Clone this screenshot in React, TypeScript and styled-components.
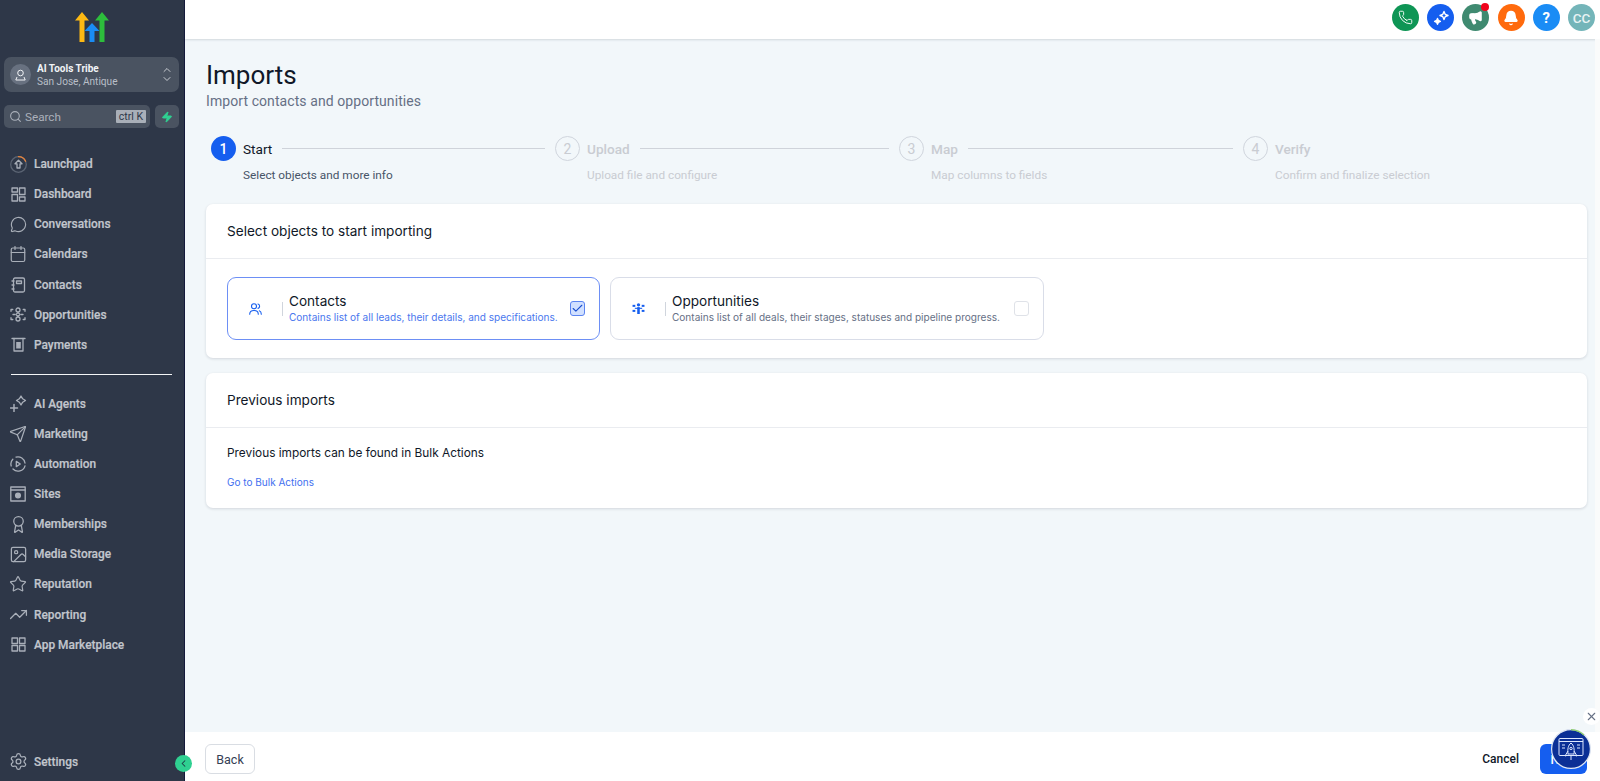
import React from 'react'
import styled, { createGlobalStyle } from 'styled-components'
import {
  Phone, Megaphone, Bell, Search, Zap, ChevronUp, ChevronDown, ChevronLeft, Check, X, MessageCircle, Calendar,
  Send, Image, Star, TrendingUp, Settings, Award,
} from 'lucide-react'

const GlobalStyle = createGlobalStyle`
  html, body { margin: 0; padding: 0; height: 100%; overflow: hidden; }
  #root { height: 100%; }
  * { box-sizing: border-box; }
  body { font-family: Roboto, "Liberation Sans", sans-serif; }
`

const Shell = styled.div`
  position: relative;
  display: flex;
  width: 100%;
  height: 781px;
  background: #f2f7fa;
`

/* ---------- sidebar ---------- */

const Sidebar = styled.aside`
  flex: 0 0 185px;
  display: flex;
  flex-direction: column;
  background: #2e3748;
  border-right: 1px solid #14193a;
  padding: 12px 5px 0 4px;
`

const LogoWrap = styled.div`
  height: 32px;
  display: flex;
  justify-content: center;
  margin-bottom: 13px;
`

const Account = styled.div`
  height: 35px;
  margin-bottom: 13px;
  background: #4a5361;
  border-radius: 7px;
  display: flex;
  align-items: center;
  padding: 0 6px 0 6px;
  color: #fff;
`

const AccountAvatar = styled.div`
  width: 21px;
  height: 21px;
  border-radius: 50%;
  background: #687180;
  display: flex;
  align-items: center;
  justify-content: center;
  margin-right: 6px;
`

const AccountText = styled.div`
  flex: 1;
  min-width: 0;
`

const AccountName = styled.div`
  font-size: 10px;
  line-height: 13px;
  font-weight: 700;
  color: #f1f3f6;
`

const AccountPlace = styled.div`
  font-size: 10.1px;
  line-height: 13px;
  color: #b9bfc8;
`

const UpDown = styled.div`
  display: flex;
  flex-direction: column;
  color: #d5d8de;
  svg + svg { margin-top: -3px; }
`

const SearchRow = styled.div`
  display: flex;
  gap: 5px;
  height: 23px;
  margin-bottom: 21px;
`

const SearchBox = styled.div`
  flex: 1;
  background: #4a5361;
  border-radius: 5px;
  display: flex;
  align-items: center;
  padding: 0 4px 0 5px;
  gap: 3px;
  color: #aab0ba;
  font-size: 11.7px;
`

const SearchLabel = styled.span`
  flex: 1;
`

const KeyHint = styled.span`
  background: #a9afb8;
  color: #2e3748;
  font-size: 10.5px;
  line-height: 13px;
  padding: 0 3px;
  border-radius: 1px;
`

const BoltButton = styled.div`
  flex: 0 0 24px;
  background: #4a5361;
  border-radius: 5px;
  display: flex;
  align-items: center;
  justify-content: center;
`

const Nav = styled.nav`
  display: flex;
  flex-direction: column;
  padding-left: 6px;
`

const NavItem = styled.div`
  height: 30.15px;
  display: flex;
  align-items: center;
  gap: 8px;
  color: #c2c6cd;
  font-size: 11.9px;
  font-weight: 500;
  -webkit-text-stroke: 0.2px #c2c6cd;
`

const NavIcon = styled.span`
  flex: 0 0 16px;
  width: 16px;
  height: 16px;
  display: flex;
  align-items: center;
  justify-content: center;
  color: #a9afb9;
  -webkit-text-stroke: 0;

  svg { flex-shrink: 0; }
`

const NavDivider = styled.div`
  height: 1px;
  background: #f4f5f7;
  margin: 14px 7px 13.5px 1px;
`

const NavBottom = styled.div`
  margin-top: auto;
  padding-left: 6px;
  padding-bottom: 4px;
`

/* ---------- main column ---------- */

const Main = styled.div`
  flex: 1;
  min-width: 0;
  display: flex;
  flex-direction: column;
`

const TopBar = styled.header`
  flex: 0 0 39px;
  background: #fff;
  box-shadow: 0 1px 2px rgba(60, 70, 90, 0.18);
  display: flex;
  align-items: center;
  justify-content: flex-end;
  gap: 8.2px;
  padding: 0 5px 4px 0;
`

const TopButton = styled.div<{ $bg: string }>`
  position: relative;
  width: 27px;
  height: 27px;
  border-radius: 50%;
  background: ${p => p.$bg};
  color: #fff;
  display: flex;
  align-items: center;
  justify-content: center;
  font-size: 15px;
  font-weight: 700;
`

const Initials = styled.span`
  font-size: 13.5px;
  font-weight: 500;
  color: #e8f3f4;
`

const RedDot = styled.span`
  position: absolute;
  top: -1px;
  right: 0;
  width: 8px;
  height: 8px;
  border-radius: 50%;
  background: #f0041c;
`

const Content = styled.main`
  flex: 1;
  min-height: 0;
  padding: 21px 8px 0 21px;
  border-right: 5px solid #fafbfb;
`

const Title = styled.h1`
  margin: 0;
  font-size: 26px;
  line-height: 31px;
  font-weight: 400;
  color: #101828;
`

const Subtitle = styled.p`
  margin: 0 0 25px;
  font-size: 14px;
  line-height: 20px;
  letter-spacing: 0.08px;
  color: #667085;
`

const Steps = styled.div`
  display: grid;
  grid-template-columns: repeat(3, 344px) 1fr;
  margin-left: 5px;
  height: 49px;
  margin-bottom: 19px;
`

const Step = styled.div`
  display: flex;
  flex-direction: column;
`

const StepHead = styled.div`
  display: flex;
  align-items: center;
  height: 25px;
`

const StepNum = styled.div<{ $active: boolean }>`
  flex: 0 0 25px;
  height: 25px;
  border-radius: 50%;
  display: flex;
  align-items: center;
  justify-content: center;
  font-size: 14px;
  font-weight: ${p => (p.$active ? 500 : 400)};
  background: ${p => (p.$active ? '#155eef' : 'transparent')};
  color: ${p => (p.$active ? '#fff' : '#c9ccd2')};
  border: ${p => (p.$active ? 'none' : '1px solid #d0d5dd')};
  margin-right: 7px;
`

const StepName = styled.div<{ $active: boolean }>`
  font-size: 13.6px;
  font-weight: ${p => (p.$active ? 400 : 500)};
  color: ${p => (p.$active ? '#101828' : '#c9ccd2')};
  margin-right: 10px;
`

const StepLine = styled.div`
  flex: 1;
  height: 1px;
  background: #cfd3da;
  margin-right: 10px;
`

const StepHint = styled.div<{ $active: boolean }>`
  margin-left: 32px;
  margin-top: 6px;
  font-size: 11.8px;
  line-height: 16px;
  color: ${p => (p.$active ? '#475467' : '#c9ccd2')};
`

const Card = styled.section`
  background: #fff;
  border-radius: 7px;
  box-shadow: 0 1px 3px rgba(16, 24, 40, 0.14);
  margin-bottom: 15px;
`

const CardHead = styled.div`
  height: 55px;
  display: flex;
  align-items: center;
  padding: 0 21px;
  border-bottom: 1px solid #eaecf0;
  font-family: Inter, sans-serif;
  font-size: 13.6px;
  font-weight: 400;
  color: #101828;
`

const TileRow = styled.div`
  display: flex;
  gap: 10px;
  padding: 18px 21px;
`

const Tile = styled.div<{ $on: boolean; $w: number }>`
  width: ${p => p.$w}px;
  height: 63px;
  border-radius: 9px;
  border: 1px solid ${p => (p.$on ? '#6d8ff5' : '#d9dde8')};
  display: flex;
  align-items: center;
  font-family: Inter, sans-serif;
`

const TileIcon = styled.div`
  flex: 0 0 55px;
  height: 14px;
  display: flex;
  align-items: center;
  justify-content: center;
  border-right: 1px solid #d0d5dd;
  color: #155eef;
`

const TileText = styled.div`
  flex: 1;
  min-width: 0;
  padding-left: 6px;
`

const TileName = styled.div`
  font-size: 13.6px;
  line-height: 17px;
  color: #101828;
`

const TileDesc = styled.div<{ $on: boolean }>`
  font-size: 10.05px;
  line-height: 15px;
  white-space: nowrap;
  color: ${p => (p.$on ? '#4a78ee' : '#667085')};
`

const CheckBox = styled.div<{ $on: boolean }>`
  flex: 0 0 15px;
  height: 15px;
  margin-right: 14px;
  border-radius: 3px;
  border: 1px solid ${p => (p.$on ? '#5b84f0' : '#dfe2e8')};
  background: ${p => (p.$on ? '#d1e0ff' : '#fff')};
  color: #1a4fd0;
  display: flex;
  align-items: center;
  justify-content: center;
`

const CardBody = styled.div`
  padding: 17px 21px 19px;
`

const BodyText = styled.div`
  font-family: Inter, sans-serif;
  font-size: 11.85px;
  line-height: 16px;
  color: #101828;
  margin-bottom: 14px;
`

const BodyLink = styled.a`
  font-family: Inter, sans-serif;
  display: block;
  font-size: 10px;
  line-height: 14px;
  color: #3f6ff0;
`

const Footer = styled.footer`
  flex: 0 0 49px;
  background: #fff;
  display: flex;
  align-items: center;
  padding: 5px 13px 0 20px;
`

const BackButton = styled.button`
  width: 50px;
  height: 30px;
  border-radius: 6px;
  border: 1px solid #d9dde3;
  background: #fff;
  font-family: Roboto, sans-serif;
  font-size: 12.5px;
  font-weight: 400;
  color: #344054;
  padding: 0;
`

const CancelButton = styled.button`
  margin-left: auto;
  margin-right: 21px;
  border: none;
  background: none;
  font-family: Roboto, sans-serif;
  font-size: 12px;
  font-weight: 500;
  color: #101828;
  padding: 0;
`

const NextButton = styled.button`
  width: 47px;
  height: 30px;
  border: none;
  border-radius: 6px;
  background: #155eef;
  color: #fff;
  font-family: Roboto, sans-serif;
  font-size: 12.5px;
  font-weight: 500;
  padding: 0;
`

/* ---------- things lying over the page ---------- */

const Collapse = styled.div`
  position: absolute;
  left: 175px;
  top: 755px;
  width: 17px;
  height: 17px;
  border-radius: 50%;
  background: #2fd091;
  color: #1d3a44;
  display: flex;
  align-items: center;
  justify-content: center;
`

const WidgetClose = styled.div`
  position: absolute;
  left: 1583px;
  top: 708px;
  width: 17px;
  height: 17px;
  border-radius: 50%;
  background: #fff;
  color: #667085;
  display: flex;
  align-items: center;
  justify-content: center;
`

const Widget = styled.div`
  position: absolute;
  left: 1551px;
  top: 729px;
  width: 40px;
  height: 40px;
`

/* ---------- drawings ---------- */

const Logo = () => (
  <svg width="34" height="31" viewBox="0 0 34 31">
    <path d="M7 0L14 8.500H9.500V30H4.500V8.500H0Z" fill="#fdb913" />
    <path d="M27 0L34 8.500H29.500V30H24.500V8.500H20Z" fill="#2dbe3c" />
    <path d="M17 11L24.500 19H19.500V30H14.500V19H9.500Z" fill="#1a8cf5" />
  </svg>
)

const s = { fill: 'none', stroke: 'currentColor', strokeWidth: 1.3, strokeLinecap: 'round', strokeLinejoin: 'round' } as const

const Launch = () => (
  <svg width="17" height="17" viewBox="0 0 17 17" {...s}>
    <circle cx="8.5" cy="8.5" r="7.8" stroke="#5b6473" />
    <path d="M8.5 0.7A7.8 7.8 0 0 1 15.6 5.2" stroke="#e8833a" />
    <path d="M8.5 4.2L12 7.8H10V12H7V7.8H5Z" />
  </svg>
)

const Dash = () => (
  <svg width="15" height="15" viewBox="0 0 15 15" {...s}>
    <rect x="1" y="1" width="5.5" height="4" />
    <rect x="1" y="7.5" width="5.5" height="6.5" />
    <rect x="8.5" y="1" width="5.5" height="6.5" />
    <rect x="8.5" y="10" width="5.5" height="4" />
  </svg>
)

const Grid = () => (
  <svg width="15" height="15" viewBox="0 0 15 15" {...s}>
    <rect x="1" y="1" width="5.5" height="5.500" />
    <rect x="1" y="8.500" width="5.5" height="5.500" />
    <rect x="8.5" y="1" width="5.5" height="5.500" />
    <rect x="8.5" y="8.500" width="5.5" height="5.500" />
  </svg>
)

const Book = () => (
  <svg width="15" height="16" viewBox="0 0 15 16" {...s}>
    <rect x="2.5" y="1" width="11" height="14" rx="1.5" />
    <path d="M5.5 4H10.5V6.500H5.5Z" />
    <path d="M1 4H3M1 8H3M1 12H3" />
  </svg>
)

const Nodes = () => (
  <svg width="16" height="15" viewBox="0 0 16 15" {...s}>
    <circle cx="8" cy="3" r="2" />
    <circle cx="8" cy="12" r="2" />
    <path d="M6 7.500L8 5.500 10 7.500 8 9.500Z" />
    <path d="M1 2.500h1.800M1 2.500v1.800M15 2.500h-1.800M15 2.500v1.800M1 12.500h1.800M1 12.500v-1.800M15 12.500h-1.800M15 12.500v-1.800M3 7.500l2 0M11 7.500l2 0" />
  </svg>
)

const Pay = () => (
  <svg width="15" height="15" viewBox="0 0 15 15" {...s}>
    <path d="M1 1.5H14" />
    <path d="M3 1.5V14H12V1.5" />
    <rect x="5.2" y="5" width="4.6" height="6.5" fill="currentColor" stroke="none" />
  </svg>
)

const Agents = () => (
  <svg width="17" height="17" viewBox="0 0 17 17" {...s}>
    <path d="M11 1L12.700 3.800 15.500 5.500l-2.800 1.700-1.700 2.800-1.700-2.800L6.500 5.500l2.800-1.700z" />
    <path d="M4 9.500V16.500M0.500 13H7.500" strokeWidth="1.5" />
  </svg>
)

const Auto = () => (
  <svg width="16" height="16" viewBox="0 0 16 16" {...s}>
    <path d="M6 1.100A7.100 7.100 0 0 1 15 7M15 9.800A7.100 7.100 0 0 1 3 13M1.200 10A7.100 7.100 0 0 1 2.800 3.200" />
    <path d="M6.300 5.400L10.300 8 6.300 10.600Z" />
  </svg>
)

const Site = () => (
  <svg width="16" height="16" viewBox="0 0 16 16" {...s}>
    <rect x="0.800" y="1" width="14.400" height="14" />
    <path d="M0.800 4H15.200" />
    <circle cx="8" cy="9.500" r="2.400" fill="currentColor" />
  </svg>
)

const Spark = () => (
  <svg width="18" height="18" viewBox="0 0 18 18" fill="none" stroke="#fff" strokeWidth="1.4" strokeLinejoin="round">
    <path d="M12 2.500l1.200 2.800 2.800 1.200-2.800 1.200L12 10.500l-1.200-2.800L8 6.500l2.800-1.200z" />
    <path d="M5.500 9.500l.9 2 2 .9-2 .9-.9 2-.9-2-2-.9 2-.9z" fill="#fff" />
  </svg>
)

const PersonPair = () => (
  <svg width="13" height="12" viewBox="0 0 13 12" {...s} strokeWidth="1.100">
    <circle cx="5" cy="3.200" r="2.500" />
    <path d="M9 1a2.300 2.300 0 0 1 0 4.400" />
    <path d="M0.700 11.200c0-2.300 1.900-3.700 4.300-3.700s4.300 1.400 4.300 3.700" />
    <path d="M10.300 7.800c1.200.4 2 1.600 2 3.400" />
  </svg>
)

const Branch = () => (
  <svg width="13" height="11" viewBox="0 0 14 12" fill="currentColor">
    <circle cx="7" cy="2" r="1.8" />
    <path d="M5.600 4.500h2.800V12H5.600z" />
    <rect x="0.500" y="2" width="3" height="2.200" />
    <rect x="0.500" y="7.500" width="3" height="2.200" />
    <rect x="10.500" y="2" width="3" height="2.200" />
    <rect x="10.500" y="7.500" width="3" height="2.200" />
    <path d="M3 5.200h8v1.200H3z" />
  </svg>
)

const RocketBadge = () => (
  <svg width="40" height="40" viewBox="0 0 40 40">
    <circle cx="20" cy="20" r="19.400" fill="#0b2f96" stroke="#dfe6f2" strokeWidth="1.200" />
    <path d="M20 0.600A19.400 19.400 0 0 1 33 6" fill="none" stroke="#8fd06a" strokeWidth="1.200" />
    <g fill="none" stroke="#dfe8ff" strokeWidth="1">
      <rect x="8" y="9.500" width="24" height="17" rx="1" />
      <path d="M8 12.500H32" />
      <path d="M20 14c3 2.500 3.500 6 3 11h-6c-.5-5 0-8.500 3-11z" fill="#0b2f96" />
      <path d="M17 22l-3 5 3.300-1M23 22l3 5-3.300-1M20 27v4" />
      <circle cx="20" cy="19.500" r="1.200" />
      <path d="M11 16h3M11 19h3M26 16h3M26 19h3" />
    </g>
  </svg>
)

const mainNav: [string, React.ReactNode][] = [
  ['Launchpad', <Launch />],
  ['Dashboard', <Dash />],
  ['Conversations', <MessageCircle size={17} strokeWidth={1.6} />],
  ['Calendars', <Calendar size={18} strokeWidth={1.6} />],
  ['Contacts', <Book />],
  ['Opportunities', <Nodes />],
  ['Payments', <Pay />],
]

const toolNav: [string, React.ReactNode][] = [
  ['AI Agents', <Agents />],
  ['Marketing', <Send size={18} strokeWidth={1.6} />],
  ['Automation', <Auto />],
  ['Sites', <Site />],
  ['Memberships', <Award size={19} strokeWidth={1.6} />],
  ['Media Storage', <Image size={19} strokeWidth={1.6} />],
  ['Reputation', <Star size={18} strokeWidth={1.6} />],
  ['Reporting', <TrendingUp size={19} strokeWidth={1.6} />],
  ['App Marketplace', <Grid />],
]

const steps = [
  { n: 1, name: 'Start', hint: 'Select objects and more info' },
  { n: 2, name: 'Upload', hint: 'Upload file and configure' },
  { n: 3, name: 'Map', hint: 'Map columns to fields' },
  { n: 4, name: 'Verify', hint: 'Confirm and finalize selection' },
]

export default function App() {
  return (
    <Shell>
      <GlobalStyle />
      <Sidebar>
        <LogoWrap><Logo /></LogoWrap>
        <Account>
          <AccountAvatar>
            <svg width="11" height="12" viewBox="0 0 11 12" fill="none" stroke="#f1f3f6" strokeWidth="1">
              <circle cx="5.500" cy="4" r="2.800" />
              <path d="M2 8L0.800 11H10.200L9 8" />
            </svg>
          </AccountAvatar>
          <AccountText>
            <AccountName>AI Tools Tribe</AccountName>
            <AccountPlace>San Jose, Antique</AccountPlace>
          </AccountText>
          <UpDown>
            <ChevronUp size={12} strokeWidth={1.8} />
            <ChevronDown size={12} strokeWidth={1.8} />
          </UpDown>
        </Account>
        <SearchRow>
          <SearchBox>
            <Search size={13} />
            <SearchLabel>Search</SearchLabel>
            <KeyHint>ctrl K</KeyHint>
          </SearchBox>
          <BoltButton><Zap size={12} fill="#2fd091" color="#2fd091" /></BoltButton>
        </SearchRow>
        <Nav>
          {mainNav.map(([label, icon]) => (
            <NavItem key={label}><NavIcon>{icon}</NavIcon>{label}</NavItem>
          ))}
          <NavDivider />
          {toolNav.map(([label, icon]) => (
            <NavItem key={label}><NavIcon>{icon}</NavIcon>{label}</NavItem>
          ))}
        </Nav>
        <NavBottom>
          <NavItem><NavIcon><Settings size={19} strokeWidth={1.6} /></NavIcon>Settings</NavItem>
        </NavBottom>
      </Sidebar>
      <Main>
        <TopBar>
          <TopButton $bg="#0e9555"><Phone size={15} strokeWidth={1.5} /></TopButton>
          <TopButton $bg="#155eef"><Spark /></TopButton>
          <TopButton $bg="#3f8a70"><Megaphone size={15} fill="#fff" /><RedDot /></TopButton>
          <TopButton $bg="#ff6a0d"><Bell size={16} fill="#fff" /></TopButton>
          <TopButton $bg="#1a8cf5">?</TopButton>
          <TopButton $bg="#74b5b9"><Initials>CC</Initials></TopButton>
        </TopBar>
        <Content>
          <Title>Imports</Title>
          <Subtitle>Import contacts and opportunities</Subtitle>
          <Steps>
            {steps.map((st, i) => (
              <Step key={st.n}>
                <StepHead>
                  <StepNum $active={i === 0}>{st.n}</StepNum>
                  <StepName $active={i === 0}>{st.name}</StepName>
                  {i < 3 && <StepLine />}
                </StepHead>
                <StepHint $active={i === 0}>{st.hint}</StepHint>
              </Step>
            ))}
          </Steps>
          <Card>
            <CardHead>Select objects to start importing</CardHead>
            <TileRow>
              <Tile $on $w={373}>
                <TileIcon><PersonPair /></TileIcon>
                <TileText>
                  <TileName>Contacts</TileName>
                  <TileDesc $on>Contains list of all leads, their details, and specifications.</TileDesc>
                </TileText>
                <CheckBox $on><Check size={13} strokeWidth={2} /></CheckBox>
              </Tile>
              <Tile $on={false} $w={434}>
                <TileIcon><Branch /></TileIcon>
                <TileText>
                  <TileName>Opportunities</TileName>
                  <TileDesc $on={false}>Contains list of all deals, their stages, statuses and pipeline progress.</TileDesc>
                </TileText>
                <CheckBox $on={false} />
              </Tile>
            </TileRow>
          </Card>
          <Card>
            <CardHead>Previous imports</CardHead>
            <CardBody>
              <BodyText>Previous imports can be found in Bulk Actions</BodyText>
              <BodyLink>Go to Bulk Actions</BodyLink>
            </CardBody>
          </Card>
        </Content>
        <Footer>
          <BackButton>Back</BackButton>
          <CancelButton>Cancel</CancelButton>
          <NextButton>Next</NextButton>
        </Footer>
      </Main>
      <Collapse><ChevronLeft size={11} strokeWidth={2.2} /></Collapse>
      <WidgetClose><X size={13} /></WidgetClose>
      <Widget><RocketBadge /></Widget>
    </Shell>
  )
}
